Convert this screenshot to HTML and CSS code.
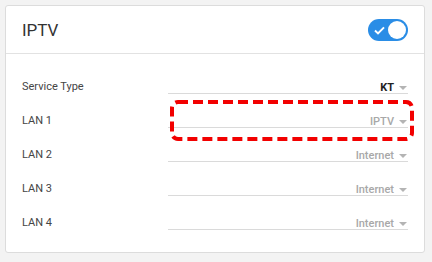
FILE: index.html
```html
<!DOCTYPE html>
<html lang="en">
<head>
    <meta charset="UTF-8">
    <meta name="viewport" content="width=device-width, initial-scale=1.0">
    <title>IPTV</title>
    <link rel="stylesheet" href="styles.css">
</head>
<body>
    <div class="card">
        <div class="card-header">
            <h2>IPTV</h2>
            <span class="toggle on">
                <svg class="check" width="11" height="9" viewBox="0 0 11 9">
                    <path d="M1 4.6 L4 7.4 L10 1.4" fill="none" stroke="#fff" stroke-width="2"/>
                </svg>
                <span class="knob"></span>
            </span>
        </div>

        <div class="card-body">
            <div class="row">
                <label>Service Type</label>
                <div class="select">
                    <span class="value strong">KT</span>
                    <span class="arrow"></span>
                </div>
            </div>
            <div class="row">
                <label>LAN 1</label>
                <div class="select">
                    <span class="value">IPTV</span>
                    <span class="arrow"></span>
                </div>
                <!-- marca vermelha por cima do campo -->
                <svg class="highlight" width="244" height="41" viewBox="0 0 244 41">
                    <rect x="2" y="2" width="240" height="37" rx="6" fill="none" stroke="#f20000" stroke-width="4" stroke-dasharray="10 5"/>
                </svg>
            </div>
            <div class="row">
                <label>LAN 2</label>
                <div class="select">
                    <span class="value">Internet</span>
                    <span class="arrow"></span>
                </div>
            </div>
            <div class="row">
                <label>LAN 3</label>
                <div class="select">
                    <span class="value">Internet</span>
                    <span class="arrow"></span>
                </div>
            </div>
            <div class="row">
                <label>LAN 4</label>
                <div class="select">
                    <span class="value">Internet</span>
                    <span class="arrow"></span>
                </div>
            </div>
        </div>
    </div>
</body>
</html>
```

FILE: styles.css
```css
body {
    margin: 0;
    padding: 5px;
    font-family: Roboto, "Liberation Sans", Arial, sans-serif;
    background-color: #f3f3f3;
}
.card {
    width: 418px;
    height: 246px;
    border: 1px solid #dcdcdc;
    border-radius: 3px;
    background-color: #fff;
}
.card-header {
    display: flex;
    align-items: center;
    justify-content: space-between;
    height: 47px;
    padding: 0 16px;
    border-bottom: 1px solid #e2e2e2;
}
.card-header h2 {
    margin: 0;
    font-size: 17px;
    font-weight: 400;
    color: #333;
}
.toggle {
    position: relative;
    width: 40px;
    height: 22px;
    border-radius: 11px;
    background-color: #2a8de6;
    margin-top: 1px;
}
.toggle .check {
    position: absolute;
    left: 6px;
    top: 7px;
}
.toggle .knob {
    position: absolute;
    right: 2px;
    top: 2px;
    width: 18px;
    height: 18px;
    border-radius: 50%;
    background-color: #fff;
}
.card-body {
    padding: 6px 16px 0 16px;
}
.row {
    position: relative;
    display: flex;
    align-items: flex-end;
    height: 34px;
}
.row label {
    flex: 1;
    font-size: 11px;
    line-height: 13px;
    color: #454545;
    padding-bottom: 1px;
}
.select {
    display: flex;
    align-items: center;
    justify-content: flex-end;
    width: 240px;
    height: 12px;
    border-bottom: 1px solid #dadada;
}
.value {
    font-size: 11px;
    font-weight: 500;
    color: #a8a8a8;
}
.value.strong {
    font-weight: 700;
    color: #222;
}
.arrow {
    width: 0;
    height: 0;
    margin: 1px 1px 0 5px;
    border-left: 4px solid transparent;
    border-right: 4px solid transparent;
    border-top: 4px solid #b4b4b4;
}
.highlight {
    position: absolute;
    left: 148px;
    top: 6px;
}
```
